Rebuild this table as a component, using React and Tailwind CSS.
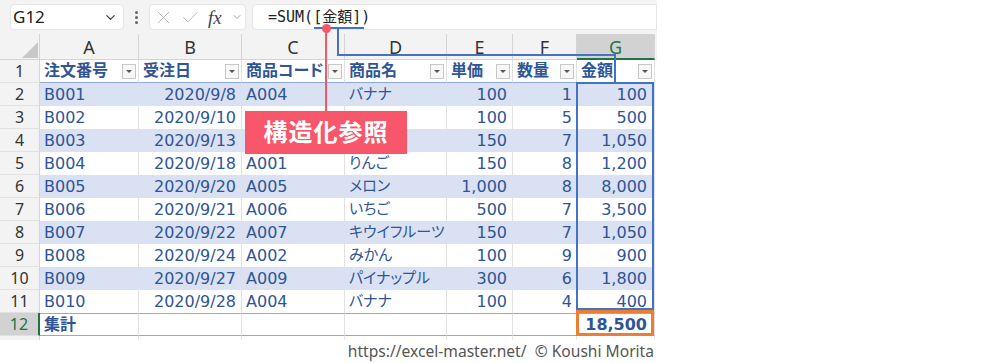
import { X, Check, ChevronDown } from "lucide-react"

const font = "font-['DejaVu_Sans','Noto_Sans_CJK_JP',sans-serif] [font-feature-settings:'palt']"

const colW = ["w-[99px]", "w-[103px]", "w-[103px]", "w-[102px]", "w-[66px]", "w-[64px]", "w-[78px]"]
const colAlign = ["justify-start pl-[4px]", "justify-end pr-[5px]", "justify-start pl-[4px]", "justify-start pl-[4px]", "justify-end pr-[5px]", "justify-end pr-[4px]", "justify-end pr-[7px]"]
const letters = ["A", "B", "C", "D", "E", "F", "G"]
const headers = ["注文番号", "受注日", "商品コード", "商品名", "単価", "数量", "金額"]

// C3, C4, D3, D4 sit under the callout label, so they stay blank here
const rows = [
  ["B001", "2020/9/8", "A004", "バナナ", "100", "1", "100"],
  ["B002", "2020/9/10", "", "", "100", "5", "500"],
  ["B003", "2020/9/13", "", "", "150", "7", "1,050"],
  ["B004", "2020/9/18", "A001", "りんご", "150", "8", "1,200"],
  ["B005", "2020/9/20", "A005", "メロン", "1,000", "8", "8,000"],
  ["B006", "2020/9/21", "A006", "いちご", "500", "7", "3,500"],
  ["B007", "2020/9/22", "A007", "キウイフルーツ", "150", "7", "1,050"],
  ["B008", "2020/9/24", "A002", "みかん", "100", "9", "900"],
  ["B009", "2020/9/27", "A009", "パイナップル", "300", "6", "1,800"],
  ["B010", "2020/9/28", "A004", "バナナ", "100", "4", "400"],
]

const FilterButton = () => (
  <div className="ml-auto mr-[2px] w-[14px] h-[15px] border border-[#c8c8c8] bg-[#f7f7f7] flex items-center justify-center">
    <div className="w-0 h-0 border-l-[3px] border-r-[3px] border-t-[3px] border-l-transparent border-r-transparent border-t-[#555]" />
  </div>
)

const RowHeader = ({ n, selected }) => (
  <div
    className={`w-[40px] h-full flex items-center justify-center text-[16px] font-['Noto_Sans',sans-serif] border-b border-[#e1e1e1] ${
      selected ? "bg-[#d2d2d2] text-[#217346] border-r-2 border-r-[#217346]" : "bg-[#f3f3f3] text-[#333] border-r border-r-[#d4d4d4]"
    }`}
  >
    {n}
  </div>
)

export default function App() {
  return (
    <div className={`relative w-[1000px] h-[363px] bg-white overflow-hidden ${font}`}>
      <div className="w-[657px]">
        {/* formula bar */}
        <div className="h-[34px] bg-[#f3f3f3] flex items-center">
          <div className="ml-[10px] w-[114px] h-[26px] bg-white rounded-[4px] border border-[#e6e6e6] flex items-center pl-[2px] pr-[5px]">
            <span className="text-[17px] text-[#222] font-['Noto_Sans',sans-serif]">G12</span>
            <ChevronDown className="ml-auto w-[15px] h-[15px] text-[#444]" strokeWidth={2} />
          </div>
          <div className="w-[25px] flex flex-col items-center gap-[2px]">
            <div className="w-[3px] h-[3px] rounded-full bg-[#666]" />
            <div className="w-[3px] h-[3px] rounded-full bg-[#666]" />
            <div className="w-[3px] h-[3px] rounded-full bg-[#666]" />
          </div>
          <div className="w-[97px] h-[26px] bg-white rounded-[4px] border border-[#e6e6e6] flex items-center pl-[3px] pr-[2px]">
            <X className="w-[21px] h-[21px] text-[#b5b5b5]" strokeWidth={1.1} />
            <Check className="ml-[6px] w-[21px] h-[21px] text-[#b5b5b5]" strokeWidth={1.1} />
            <span className="ml-[7px] text-[19px] italic text-[#444] font-['Liberation_Serif',serif] leading-none">fx</span>
            <ChevronDown className="ml-auto w-[12px] h-[12px] text-[#888]" strokeWidth={1.5} />
          </div>
          <div className="ml-[6px] flex-1 h-[26px] bg-white rounded-l-[4px] border border-[#e6e6e6] flex items-center pl-[15px]">
            <span className="text-[15px] text-[#222] font-['DejaVu_Sans_Mono','Noto_Sans_CJK_JP',monospace]">=SUM([金額])</span>
          </div>
        </div>

        {/* column letters */}
        <div className="h-[26px] flex bg-[#f3f3f3]">
          <div className="w-[40px] h-full relative border-r border-[#d4d4d4] border-b border-b-[#d4d4d4]">
            <svg className="absolute left-[22px] top-[8px]" width="16" height="16" viewBox="0 0 16 16">
              <polygon points="0,16 16,16 16,0" fill="#c8c8c8" />
            </svg>
          </div>
          {letters.map((l, i) => (
            <div
              key={l}
              className={`${colW[i]} h-full flex items-center justify-center pt-[2px] text-[18px] font-['Noto_Sans',sans-serif] border-r border-[#d4d4d4] ${
                l === "G" ? "bg-[#d2d2d2] text-[#217346] border-b-2 border-b-[#217346]" : "text-[#333] border-b border-b-[#d4d4d4]"
              }`}
            >
              {l}
            </div>
          ))}
        </div>

        {/* header row 1 */}
        <div className="h-[23px] flex">
          <RowHeader n={1} />
          {headers.map((h, i) => (
            <div key={h} className={`${colW[i]} h-full flex items-center pl-[4px] bg-white border-r border-[#e1e1e1] border-b border-b-[#8ea9db]`}>
              <span className="text-[16px] font-bold text-[#2f5597]">{h}</span>
              <FilterButton />
            </div>
          ))}
        </div>

        {/* data rows */}
        {rows.map((r, ri) => {
          const band = ri % 2 === 0
          return (
            <div key={ri} className="h-[23px] flex">
              <RowHeader n={ri + 2} />
              {r.map((v, ci) => (
                <div
                  key={ci}
                  className={`${colW[ci]} h-full flex items-center ${colAlign[ci]} border-r ${
                    band ? "bg-[#d9e1f2] border-[#d9e1f2]" : "bg-white border-[#e1e1e1]"
                  }`}
                >
                  <span className={`text-[#2f5597] whitespace-nowrap ${ci === 3 ? "text-[15px]" : "text-[16px]"}`}>{v}</span>
                </div>
              ))}
            </div>
          )
        })}

        {/* total row */}
        <div className="h-[23px] flex">
          <RowHeader n={12} selected />
          {colW.map((w, ci) => (
            <div
              key={ci}
              className={`${w} h-full flex items-center ${colAlign[ci]} bg-white border-r border-[#e1e1e1] border-t border-t-[#8ea9db] border-b border-b-[#8ea9db]`}
            >
              <span className="text-[16px] font-bold text-[#2f5597]">{ci === 0 ? "集計" : ci === 6 ? "18,500" : ""}</span>
            </div>
          ))}
        </div>

        {/* next row (cut) */}
        <div className="h-[4px] flex">
          <div className="w-[40px] h-full bg-[#f3f3f3] border-r border-[#d4d4d4]" />
          {colW.map((w, ci) => (
            <div key={ci} className={`${w} h-full border-r border-[#e8e8e8]`} />
          ))}
        </div>

        {/* footer */}
        <div className="pt-[2px] pr-[3px] text-right text-[15.6px] leading-[19px] text-[#555] font-['Noto_Sans',sans-serif]">
          https://excel-master.net/ &nbsp;© Koushi Morita
        </div>
      </div>

      {/* overlays */}
      <div className="absolute left-[314px] top-[27px] w-[50px] h-[2px] bg-[#4472c4]" />
      <div className="absolute left-[337px] top-[27px] w-[2px] h-[29px] bg-[#4472c4]" />
      <div className="absolute left-[337px] top-[54px] w-[279px] h-[2px] bg-[#4472c4]" />
      <div className="absolute left-[614px] top-[54px] w-[2px] h-[29px] bg-[#4472c4]" />
      <div className="absolute left-[576px] top-[82px] w-[78px] h-[228px] border-2 border-[#4472c4]" />
      <div className="absolute left-[576px] top-[310px] w-[78px] h-[26px] border-[3px] border-[#ed7d31]" />

      <div className="absolute left-[325px] top-[28px] w-[2px] h-[84px] bg-[#f8566b]" />
      <div className="absolute left-[322px] top-[24px] w-[9px] h-[9px] rounded-full bg-[#f8566b]" />
      <div className="absolute left-[245px] top-[111px] w-[162px] h-[43px] bg-[#f8566b] flex items-center justify-center">
        <span className="text-[24px] font-bold text-white tracking-[1px]">構造化参照</span>
      </div>
    </div>
  )
}
